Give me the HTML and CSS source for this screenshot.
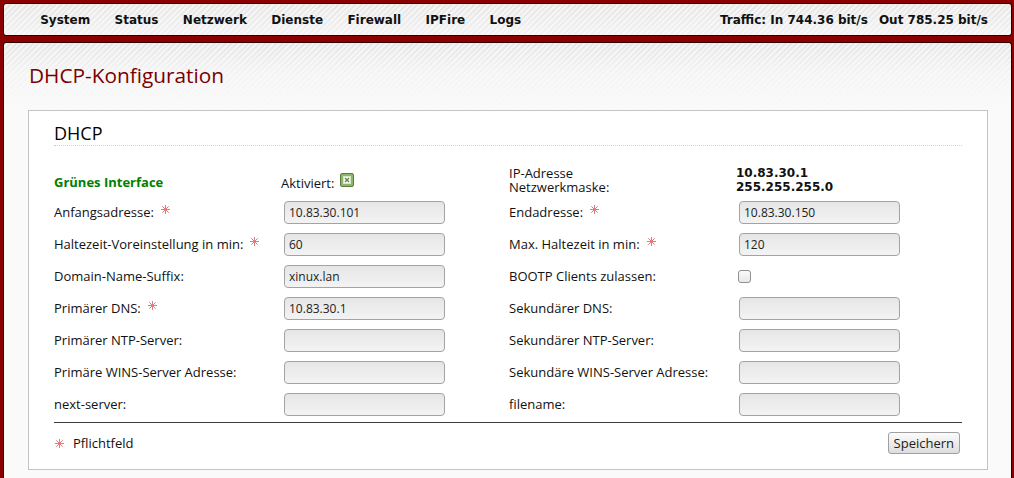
FILE: index.html
```html
<!DOCTYPE html>
<html lang="de">
<head>
<meta charset="utf-8">
<title>DHCP-Konfiguration</title>
<link rel="stylesheet" href="styles.css">
</head>
<body>
<div class="topbar">
  <nav class="nav">
    <a class="nav-item">System</a>
    <a class="nav-item">Status</a>
    <a class="nav-item">Netzwerk</a>
    <a class="nav-item">Dienste</a>
    <a class="nav-item">Firewall</a>
    <a class="nav-item">IPFire</a>
    <a class="nav-item">Logs</a>
  </nav>
  <div class="traffic"><span>Traffic: In 744.36 bit/s</span><span>Out 785.25 bit/s</span></div>
</div>
<div class="main">
  <h1 class="title">DHCP-Konfiguration</h1>
  <section class="box">
    <h2 class="box-title">DHCP</h2>
    <div class="form">
      <div class="cell iface">Grünes Interface</div>
      <div class="cell activ">Aktiviert: <svg class="chk-on" width="14" height="14" viewBox="0 0 14 14"><rect x="0.5" y="0.5" width="13" height="13" rx="1.5" fill="#8fb46e" stroke="#5b7d3e"/><rect x="3.5" y="3.5" width="7" height="7" fill="#fff" stroke="#d8e6cc"/><path d="M5 5 L9 9 M9 5 L5 9" stroke="#5b8a3c" stroke-width="1.4"/></svg></div>
      <div class="cell two-lines"><span class="line">IP-Adresse</span><span class="line">Netzwerkmaske:</span></div>
      <div class="cell two-lines values"><span class="line">10.83.30.1</span><span class="line">255.255.255.0</span></div>

      <div class="cell">Anfangsadresse: <span class="req"><svg width="9" height="9" viewBox="0 0 9 9"><path d="M4.5 0V9M0 4.5H9M1.3 1.3L7.7 7.7M7.7 1.3L1.3 7.7" stroke="#e57a7a" stroke-width="1"/></svg></span></div>
      <div class="cell"><input class="field" value="10.83.30.101"></div>
      <div class="cell">Endadresse: <span class="req"><svg width="9" height="9" viewBox="0 0 9 9"><path d="M4.5 0V9M0 4.5H9M1.3 1.3L7.7 7.7M7.7 1.3L1.3 7.7" stroke="#e57a7a" stroke-width="1"/></svg></span></div>
      <div class="cell"><input class="field" value="10.83.30.150"></div>

      <div class="cell">Haltezeit-Voreinstellung in min: <span class="req"><svg width="9" height="9" viewBox="0 0 9 9"><path d="M4.5 0V9M0 4.5H9M1.3 1.3L7.7 7.7M7.7 1.3L1.3 7.7" stroke="#e57a7a" stroke-width="1"/></svg></span></div>
      <div class="cell"><input class="field" value="60"></div>
      <div class="cell">Max. Haltezeit in min: <span class="req"><svg width="9" height="9" viewBox="0 0 9 9"><path d="M4.5 0V9M0 4.5H9M1.3 1.3L7.7 7.7M7.7 1.3L1.3 7.7" stroke="#e57a7a" stroke-width="1"/></svg></span></div>
      <div class="cell"><input class="field" value="120"></div>

      <div class="cell">Domain-Name-Suffix:</div>
      <div class="cell"><input class="field" value="xinux.lan"></div>
      <div class="cell">BOOTP Clients zulassen:</div>
      <div class="cell"><span class="chk-off"></span></div>

      <div class="cell">Primärer DNS: <span class="req"><svg width="9" height="9" viewBox="0 0 9 9"><path d="M4.5 0V9M0 4.5H9M1.3 1.3L7.7 7.7M7.7 1.3L1.3 7.7" stroke="#e57a7a" stroke-width="1"/></svg></span></div>
      <div class="cell"><input class="field" value="10.83.30.1"></div>
      <div class="cell">Sekundärer DNS:</div>
      <div class="cell"><input class="field" value=""></div>

      <div class="cell">Primärer NTP-Server:</div>
      <div class="cell"><input class="field" value=""></div>
      <div class="cell">Sekundärer NTP-Server:</div>
      <div class="cell"><input class="field" value=""></div>

      <div class="cell">Primäre WINS-Server Adresse:</div>
      <div class="cell"><input class="field" value=""></div>
      <div class="cell">Sekundäre WINS-Server Adresse:</div>
      <div class="cell"><input class="field" value=""></div>

      <div class="cell">next-server:</div>
      <div class="cell"><input class="field" value=""></div>
      <div class="cell">filename:</div>
      <div class="cell"><input class="field" value=""></div>
    </div>
    <div class="footer">
      <div class="legend"><span class="req-legend"><svg width="9" height="9" viewBox="0 0 9 9"><path d="M4.5 0V9M0 4.5H9M1.3 1.3L7.7 7.7M7.7 1.3L1.3 7.7" stroke="#e57a7a" stroke-width="1"/></svg></span>Pflichtfeld</div>
      <button class="btn">Speichern</button>
    </div>
  </section>
</div>
</body>
</html>
```
FILE: styles.css
```css
html, body {
  height: 100%;
}
body {
  margin: 0;
  padding: 3px 2px 0 3px;
  box-sizing: border-box;
  background: #8a0000;
  font-family: "Open Sans", "DejaVu Sans", sans-serif;
  color: #111;
  overflow: hidden;
}
.topbar {
  height: 31px;
  border: 1px solid #2a0000;
  border-radius: 3px;
  background:
    linear-gradient(to bottom, rgba(255,255,255,0) 0, rgba(250,250,250,0.6) 100%),
    repeating-linear-gradient(135deg, #e6e6e6 0 2px, #f4f4f4 2px 4px);
  display: flex;
  align-items: center;
  font-family: "DejaVu Sans", sans-serif;
  font-weight: bold;
  font-size: 12px;
  color: #111;
}
.nav {
  display: flex;
  padding-left: 24px;
}
.nav-item {
  padding: 0 12.2px;
}
.traffic {
  margin-left: auto;
  padding-right: 23px;
  display: flex;
  gap: 11px;
}
.main {
  margin-top: 6px;
  height: calc(100% - 40px);
  border: 1px solid #2a0000;
  border-bottom: 0;
  border-radius: 3px 3px 0 0;
  background:
    linear-gradient(to bottom, rgba(250,250,250,0) 0, rgba(250,250,250,0.7) 30px, #fafafa 70px),
    repeating-linear-gradient(135deg, #e6e6e6 0 2px, #f4f4f4 2px 4px);
  padding: 0 23px 0 24px;
}
.title {
  margin: 0;
  padding: 20px 0 0 1px;
  font-size: 20.8px;
  line-height: 24px;
  font-weight: normal;
  color: #7a0000;
}
.box {
  margin-top: 23px;
  border: 1px solid #c4c4c4;
  background: #fff;
  padding: 0 25px 15px;
}
.box-title {
  margin: 0;
  padding: 11px 0 1px;
  font-size: 18px;
  line-height: 22px;
  font-weight: normal;
  color: #000;
  border-bottom: 1px dotted #cfcfcf;
}
.form {
  margin-top: 18px;
  display: grid;
  grid-template-columns: 230px 225px 230px 1fr;
  grid-auto-rows: 32px;
  font-size: 13px;
}
.cell {
  display: flex;
  align-items: center;
  white-space: nowrap;
}
.iface {
  color: #008000;
  font-weight: bold;
  padding-top: 3px;
}
.activ {
  margin-left: -3px;
  padding-top: 6px;
}
.chk-on {
  margin-left: 6px;
  margin-top: -6px;
}
.two-lines {
  flex-direction: column;
  align-items: flex-start;
  justify-content: center;
}
.line {
  display: block;
  height: 14px;
  line-height: 14px;
}
.values {
  margin-left: -3px;
  font-family: "DejaVu Sans", sans-serif;
  font-weight: bold;
  font-size: 12px;
}
.req {
  display: inline-flex;
  margin-left: 7px;
  margin-top: -5px;
}
.field {
  width: 161px;
  height: 23px;
  box-sizing: border-box;
  border: 1px solid #a3a3a3;
  border-radius: 4px;
  background: linear-gradient(to bottom, #e6e6e6, #f3f3f3);
  padding: 0 4px;
  font-family: "Open Sans", sans-serif;
  font-size: 12px;
  color: #222;
  margin: 0;
}
.chk-off {
  display: block;
  width: 13px;
  height: 13px;
  box-sizing: border-box;
  margin-left: -1px;
  border: 1px solid #8f8f8f;
  border-radius: 3px;
  background: linear-gradient(to bottom, #fafafa, #e8e8e8);
}
.footer {
  margin-top: 2px;
  border-top: 1px solid #3c3c3c;
  padding-top: 9px;
  display: flex;
  align-items: center;
  justify-content: space-between;
}
.legend {
  display: flex;
  align-items: center;
  font-size: 13px;
}
.req-legend {
  display: inline-flex;
  margin: 0 9px 0 0;
  padding-left: 1px;
}
.btn {
  height: 22px;
  margin-right: 2px;
  padding: 0 5px;
  border: 1px solid #a0a0a0;
  border-radius: 3px;
  background: linear-gradient(to bottom, #fbfbfb, #dddddd);
  font-family: "Open Sans", sans-serif;
  font-size: 13px;
  color: #222;
}
```
